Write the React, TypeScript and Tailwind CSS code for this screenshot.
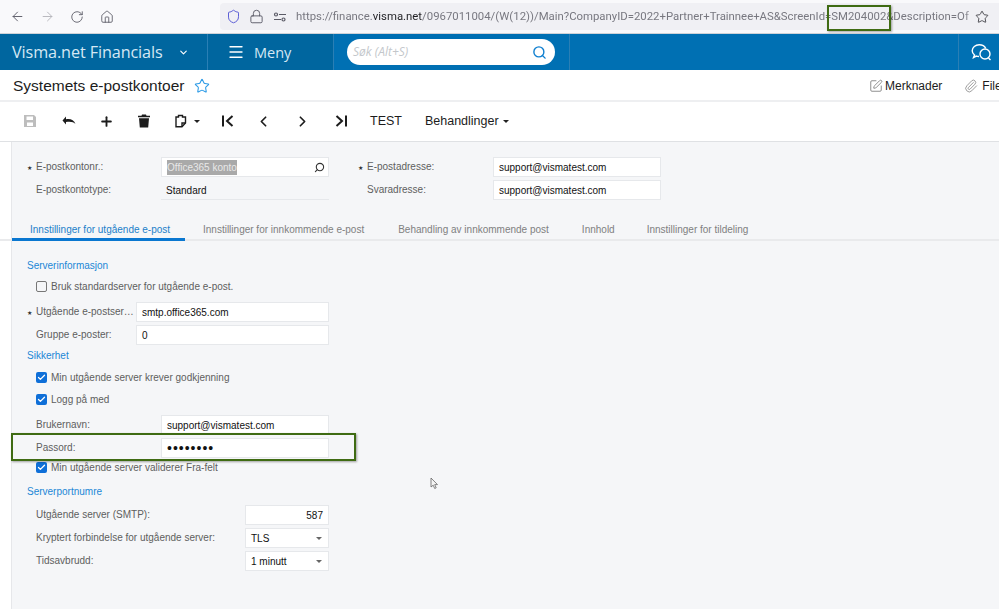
import React from 'react';
import { ArrowLeft, ArrowRight, RotateCw, Home, Shield, Lock, Star, Search, Menu, ChevronDown, Plus, ChevronLeft, ChevronRight, Check, SquarePen, Paperclip } from 'lucide-react';

const FONT = "font-['Liberation_Sans',Arial,sans-serif]";

const Caret: React.FC<{ className?: string }> = ({ className = 'ml-[5px]' }) => (
  <span className={`${className} w-0 h-0 border-x-[3px] border-x-transparent border-t-[3px] border-t-[#222]`} />
);

const Field: React.FC<{ w: string; children?: React.ReactNode; className?: string }> = ({ w, children, className = '' }) => (
  <div className={`${w} h-5 flex items-center px-[5px] bg-white border border-[#e6e8eb] text-[10px] text-[#111] ${className}`}>{children}</div>
);

const Label: React.FC<{ w: string; req?: boolean; children: React.ReactNode }> = ({ w, req, children }) => (
  <div className={`${w} shrink-0 relative pl-[36px] text-[10px] text-[#5e5e5e] whitespace-nowrap leading-5 -mt-[1px]`}>
    {req && <span className="absolute left-[27px] top-[1px] text-[6px] text-[#333]">★</span>}
    {children}
  </div>
);

const Row: React.FC<{ className?: string; children: React.ReactNode }> = ({ className = '', children }) => (
  <div className={`flex items-center h-5 ${className}`}>{children}</div>
);

const Heading: React.FC<{ className?: string; children: React.ReactNode }> = ({ className = '', children }) => (
  <div className={`pl-[27px] text-[10px] leading-4 text-[#1b87d6] ${className}`}>{children}</div>
);

const CheckRow: React.FC<{ checked?: boolean; className?: string; children: React.ReactNode }> = ({ checked, className = '', children }) => (
  <div className={`flex items-center h-4 pl-[36px] gap-[4px] text-[10px] text-[#5e5e5e] ${className}`}>
    {checked ? (
      <span className="w-[11px] h-[11px] rounded-[2px] bg-[#0f6fd8] flex items-center justify-center">
        <Check size={9} strokeWidth={3.5} color="#fff" />
      </span>
    ) : (
      <span className="w-[11px] h-[11px] rounded-[2px] border border-[#777] bg-[#f5f6f8]" />
    )}
    {children}
  </div>
);

const Select: React.FC<{ value: string }> = ({ value }) => (
  <Field w="w-[84px]" className="justify-between pr-[6px]">
    <span>{value}</span>
    <span className="w-0 h-0 border-x-[3.5px] border-x-transparent border-t-[3.5px] border-t-[#666]" />
  </Field>
);

const ToolIcon: React.FC<{ d: string; fill?: string }> = ({ d, fill = '#1c1c1c' }) => (
  <svg width={14} height={14} viewBox="0 0 14 14" fill={fill}><path d={d} /></svg>
);

export default function App() {
  return (
    <div className={`w-[999px] h-[609px] overflow-hidden relative bg-white ${FONT}`}>
      {/* Browser chrome */}
      <div className="h-[34px] bg-[#f9f9fb] flex items-center border-b border-[#cfd3d8]">
        <div className="w-[220px] flex items-center pl-[10px] text-[#5b5b66]">
          <ArrowLeft size={15} strokeWidth={1.5} />
          <ArrowRight size={15} strokeWidth={1.5} className="ml-[15px] text-[#b5b5bb]" />
          <RotateCw size={14} strokeWidth={1.5} className="ml-[15px]" />
          <Home size={14} strokeWidth={1.5} className="ml-[16px]" />
        </div>
        <div className="flex-1 min-w-0 h-[27px] bg-[#f0f0f4] rounded-l-[4px] flex items-center pl-[6px]">
          <Shield size={15} strokeWidth={1.6} className="text-[#5d5fd6] shrink-0" />
          <Lock size={15} strokeWidth={1.5} className="text-[#5b5b66] shrink-0 ml-[8px]" />
          <svg width="14" height="14" viewBox="0 0 14 14" className="shrink-0 ml-[9px]" fill="none" stroke="#5b5b66" strokeWidth="1.2">
            <path d="M6 4.500h7M1 9.500h7" /><circle cx="3" cy="4.500" r="1.500" /><circle cx="10.500" cy="9.500" r="1.500" />
          </svg>
          <div className="ml-[9px] flex-1 min-w-0 overflow-hidden text-[11.360px] text-[#787880] whitespace-nowrap font-['Roboto',sans-serif] [mask-image:linear-gradient(to_left,transparent,black_10px)]">
            https://finance.<span className="text-[#1f1f23]">visma.net</span>/0967011004/(W(12))/Main?CompanyID=2022+Partner+Trainnee+AS&amp;ScreenId=SM204002&amp;Description=Of
          </div>
          <div className="shrink-0 w-[24px] h-full flex items-center">
            <Star size={14} strokeWidth={1.5} className="text-[#3a3a40]" />
          </div>
        </div>
      </div>

      {/* App header */}
      <div className="h-[36px] bg-[#0070b3] flex items-stretch text-white font-['Open_Sans',sans-serif]">
        <div className="w-[208px] bg-[#00669f] flex items-center pl-[12px] border-r border-[#2a7fb5] text-[#d5e8f4]">
          <span className="text-[16.200px] tracking-[-0.1px] pt-[1px]">Visma.net Financials</span>
          <ChevronDown size={11} strokeWidth={2.5} className="ml-[15px] text-white" />
        </div>
        <div className="w-[126px] bg-[#00669f] flex items-center pl-[19px] border-r border-[#2a7fb5] text-[#d5e8f4]">
          <Menu size={18} strokeWidth={1.8} className="text-white" />
          <span className="ml-[9px] text-[14.500px] pt-[2px]">Meny</span>
        </div>
        <div className="w-[236px] flex items-center pl-[13px] border-r border-[#2a7fb5]">
          <div className="w-[208px] h-[26px] rounded-full bg-white flex items-center justify-between pl-[6px] pr-[8px]">
            <span className="text-[12px] italic text-[#c3c7cb]">Søk (Alt+S)</span>
            <Search size={15} strokeWidth={2.2} className="text-[#0f7fd0]" />
          </div>
        </div>
        <div className="flex-1" />
        <div className="w-[41px] flex items-center pl-[12px] border-l border-[#2a7fb5]">
          <svg width="22" height="20" viewBox="0 0 22 20" fill="none" stroke="#fff" strokeWidth="1.4">
            <path d="M8 14.500c-1 0-2-.2-2.600-.4L2.500 15.500l1-2.500C2 11.900 1.200 10.400 1.200 8.800 1.200 5.300 4.400 2.700 8.200 2.700c3 0 5.500 1.500 6.500 3.700" />
            <circle cx="14" cy="12" r="5" />
            <path d="M17.500 16l2 2" />
          </svg>
        </div>
      </div>

      {/* Page title */}
      <div className="h-[32px] flex items-center justify-between border-b-2 border-[#eeeff1]">
        <div className="flex items-center pl-[13px] pt-[1px]">
          <span className="text-[15.500px] text-[#1c1c1c]">Systemets e-postkontoer</span>
          <Star size={16} strokeWidth={1.6} className="ml-[10px] text-[#2d9be6]" />
        </div>
        <div className="flex items-center text-[12px] text-[#1c1c1c] whitespace-nowrap w-[130px] pt-[1px]">
          <SquarePen size={14} strokeWidth={1.4} className="text-[#777] shrink-0" />
          <span className="ml-[2px]">Merknader</span>
          <Paperclip size={14} strokeWidth={1.4} className="ml-[22px] text-[#888] shrink-0" />
          <span className="ml-[4px]">Filer</span>
        </div>
      </div>

      {/* Toolbar */}
      <div className="h-[40px] flex items-center pl-[23px] pb-[1px] border-b border-[#dfe1e4] text-[#1c1c1c]">
        <ToolIcon fill="#bdbdbd" d="M1 1h10l2 2v10H1zM3.500 2.500v3.500h6.500V2.500zM4 8.500v3.500h6v-3.500z" />
        <div className="ml-[25px] w-[14px]"><ToolIcon d="M4 2.500v2.700c4.500-.8 8 .8 9.500 4.800-2-2-5-2.700-9.500-1.900v2.400L.5 6.500z" /></div>
        <Plus size={15} strokeWidth={3} className="ml-[23px]" />
        <div className="ml-[23px] w-[14px]"><ToolIcon d="M5 0.500h4l.5 1.200H13v1.500H1V1.700h3.500zM2 4.200h10l-.8 9.300H2.800z" /></div>
        <div className="ml-[24px] flex items-center w-[32px]">
          <svg width="12" height="14" viewBox="0 0 12 14" fill="none" stroke="#1c1c1c" strokeWidth="1.4"><path d="M1 3h2.500V1.500h4V3H10.500v6l-3.500 3.800H1z" /><path d="M7 12.500V9h3.500" /></svg>
          <Caret className="ml-[7px]" />
        </div>
        <div className="ml-[14px] flex items-center w-[14px]"><svg width="14" height="14" viewBox="0 0 14 14" fill="none" stroke="#1c1c1c" strokeWidth="2"><path d="M2 1.500v11M11.500 2L6 7l5.500 5" /></svg></div>
        <ChevronLeft size={17} strokeWidth={2.4} className="ml-[20px]" />
        <ChevronRight size={17} strokeWidth={2.4} className="ml-[22px]" />
        <div className="ml-[23px] w-[14px]"><svg width="14" height="14" viewBox="0 0 14 14" fill="none" stroke="#1c1c1c" strokeWidth="2"><path d="M12 1.500v11M2.500 2L8 7l-5.500 5" /></svg></div>
        <span className="ml-[22px] text-[12.500px]">TEST</span>
        <span className="ml-[23px] text-[12.500px]">Behandlinger</span>
        <Caret className="ml-[4px]" />
      </div>

      {/* Form area */}
      <div className="ml-[11px] h-[467px] bg-[#f5f6f8] border-l border-[#e6e7ea]">
        <div className="-ml-[12px]">
          <div className="pt-[15px] flex">
            <div className="w-[358px] flex flex-col gap-[3px]">
              <Row>
                <Label w="w-[161px]" req>E-postkontonr.:</Label>
                <Field w="w-[168px]" className="justify-between">
                  <span className="bg-[#a9a9a9] text-[#e8e8e8]">Office365 konto</span>
                  <Search size={11} strokeWidth={2.4} className="-scale-x-100 text-[#333] -mr-[2px]" />
                </Field>
              </Row>
              <Row>
                <Label w="w-[161px]">E-postkontotype:</Label>
                <div className="w-[168px] h-5 flex items-center px-[5px] pt-[1px] border-b border-[#e6e8eb] text-[10px] text-[#111]">Standard</div>
              </Row>
            </div>
            <div className="flex flex-col gap-[3px] -ml-[27px]">
              <Row>
                <Label w="w-[162px]" req>E-postadresse:</Label>
                <Field w="w-[168px]">support@vismatest.com</Field>
              </Row>
              <Row>
                <Label w="w-[162px]">Svaradresse:</Label>
                <Field w="w-[168px]">support@vismatest.com</Field>
              </Row>
            </div>
          </div>

          {/* Tabs */}
          <div className="mt-[19px] h-[22px] pl-[12px] flex border-b-2 border-[#e9eaec] text-[10px] text-[#808080] whitespace-nowrap">
            <div className="w-[173px] h-[22px] pl-[18px] leading-[21px] border-b-[3px] border-[#0a77d0] text-[#1b7fc9]">Innstillinger for utgående e-post</div>
            <div className="ml-[18px] leading-[21px]">Innstillinger for innkommende e-post</div>
            <div className="ml-[34px] leading-[21px]">Behandling av innkommende post</div>
            <div className="ml-[33px] leading-[21px]">Innhold</div>
            <div className="ml-[32px] leading-[21px]">Innstillinger for tildeling</div>
          </div>

          {/* Server settings */}
          <Heading className="mt-[17px]">Serverinformasjon</Heading>
          <CheckRow className="mt-[4px]">Bruk standardserver for utgående e-post.</CheckRow>
          <div className="mt-[8px] flex flex-col gap-[3px]">
            <Row>
              <Label w="w-[136px]" req>Utgående e-postser…</Label>
              <Field w="w-[193px]">smtp.office365.com</Field>
            </Row>
            <Row>
              <Label w="w-[136px]">Gruppe e-poster:</Label>
              <Field w="w-[193px]">0</Field>
            </Row>
          </div>
          <Heading className="mt-[3px]">Sikkerhet</Heading>
          <CheckRow checked className="mt-[5px]">Min utgående server krever godkjenning</CheckRow>
          <CheckRow checked className="mt-[6px]">Logg på med</CheckRow>
          <div className="mt-[8px] flex flex-col gap-[3px]">
            <Row>
              <Label w="w-[161px]">Brukernavn:</Label>
              <Field w="w-[168px]">support@vismatest.com</Field>
            </Row>
            <Row>
              <Label w="w-[161px]">Passord:</Label>
              <Field w="w-[168px]" className="!text-[14px] tracking-[1px]">••••••••</Field>
            </Row>
          </div>
          <CheckRow checked className="mt-[1px]">Min utgående server validerer Fra-felt</CheckRow>
          <Heading className="mt-[9px]">Serverportnumre</Heading>
          <div className="mt-[5px] flex flex-col gap-[3px]">
            <Row>
              <Label w="w-[245px]">Utgående server (SMTP):</Label>
              <Field w="w-[84px]" className="justify-end">587</Field>
            </Row>
            <Row>
              <Label w="w-[245px]">Kryptert forbindelse for utgående server:</Label>
              <Select value="TLS" />
            </Row>
            <Row>
              <Label w="w-[245px]">Tidsavbrudd:</Label>
              <Select value="1 minutt" />
            </Row>
          </div>
        </div>
      </div>

      {/* Annotations drawn over the screenshot */}
      <div className="absolute left-[827px] top-[5px] w-[64px] h-[26px] border-2 border-[#3f6b13] shadow-[1px_1px_2px_rgba(0,0,0,0.35)]" />
      <div className="absolute left-[11px] top-[433px] w-[345px] h-[28px] border-2 border-[#3f6b13] shadow-[1px_1px_2px_rgba(0,0,0,0.35)]" />
      {/* Mouse pointer */}
      <svg className="absolute left-[430px] top-[477px]" width="9" height="13" viewBox="0 0 9 13" fill="#f4f4f4" stroke="#666" strokeWidth="0.8">
        <path d="M1 1v9l2.200-1.800 1.500 3.300 1.500-.7-1.500-3.200H7.500z" />
      </svg>
    </div>
  );
}
